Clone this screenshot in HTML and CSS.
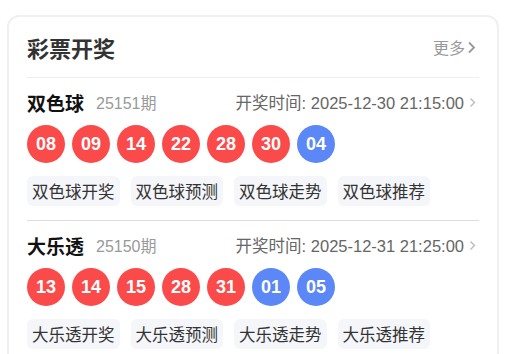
FILE: index.html
```html
<!DOCTYPE html>
<html lang="zh-CN">
<head>
  <meta charset="UTF-8" />
  <meta name="viewport" content="width=device-width, initial-scale=1.0"/>
  <title>彩票开奖</title>
  <link rel="stylesheet" href="styles.css">
</head>
<body>

  <div class="card">
    <div class="card-header">
      <h2>彩票开奖</h2>
      <a class="more" href="#">更多
        <svg width="9" height="13" viewBox="0 0 9 13"><path d="M2 1.5 L7 6.5 L2 11.5" fill="none" stroke="#999" stroke-width="1.8"/></svg>
      </a>
    </div>

    <div class="lottery">
      <div class="lottery-top">
        <span class="name">双色球</span>
        <span class="issue">25151期</span>
        <span class="time">开奖时间: 2025-12-30 21:15:00
          <svg width="7" height="11" viewBox="0 0 7 11"><path d="M1.5 1.5 L5.5 5.5 L1.5 9.5" fill="none" stroke="#bbb" stroke-width="1.4"/></svg>
        </span>
      </div>
      <div class="balls">
        <span class="ball red">08</span>
        <span class="ball red">09</span>
        <span class="ball red">14</span>
        <span class="ball red">22</span>
        <span class="ball red">28</span>
        <span class="ball red">30</span>
        <span class="ball blue">04</span>
      </div>
      <div class="tags">
        <a href="#">双色球开奖</a>
        <a href="#">双色球预测</a>
        <a href="#">双色球走势</a>
        <a href="#">双色球推荐</a>
      </div>
    </div>

    <div class="lottery">
      <div class="lottery-top">
        <span class="name">大乐透</span>
        <span class="issue">25150期</span>
        <span class="time">开奖时间: 2025-12-31 21:25:00
          <svg width="7" height="11" viewBox="0 0 7 11"><path d="M1.5 1.5 L5.5 5.5 L1.5 9.5" fill="none" stroke="#bbb" stroke-width="1.4"/></svg>
        </span>
      </div>
      <div class="balls">
        <span class="ball red">13</span>
        <span class="ball red">14</span>
        <span class="ball red">15</span>
        <span class="ball red">28</span>
        <span class="ball red">31</span>
        <span class="ball blue">01</span>
        <span class="ball blue">05</span>
      </div>
      <div class="tags">
        <a href="#">大乐透开奖</a>
        <a href="#">大乐透预测</a>
        <a href="#">大乐透走势</a>
        <a href="#">大乐透推荐</a>
      </div>
    </div>
  </div>

</body>
</html>
```

FILE: styles.css
```css
body {
  font-family: 'Liberation Sans', 'Noto Sans CJK SC', sans-serif;
  background: #fff;
  margin: 0;
  padding: 15px 0 0 7px;
  color: #333;
}

.card {
  width: 492px;
  box-sizing: border-box;
  border: 2px solid #f0f0f0;
  border-radius: 12px;
  padding: 0 18px;
  background: #fff;
}

.card-header {
  display: flex;
  justify-content: space-between;
  align-items: center;
  height: 60px;
  border-bottom: 1px solid #eee;
}

.card-header h2 {
  font-size: 22px;
  font-weight: bold;
  color: #333;
  margin: 0;
}

.more {
  display: flex;
  align-items: center;
  gap: 2px;
  font-size: 16px;
  color: #999;
  text-decoration: none;
  margin-right: 3px;
}

.lottery {
  padding: 14px 0;
  border-bottom: 1px solid #ddd;
}

.lottery:last-child {
  border-bottom: none;
}

.lottery-top {
  display: flex;
  align-items: center;
  height: 20px;
}

.name {
  font-size: 19px;
  font-weight: bold;
  color: #111;
}

.issue {
  font-size: 16px;
  color: #999;
  margin-left: 12px;
}

.time {
  margin-left: auto;
  display: flex;
  align-items: center;
  gap: 5px;
  font-size: 16.5px;
  color: #666;
  margin-right: 3px;
}

.balls {
  display: flex;
  gap: 7px;
  margin-top: 13px;
}

.ball {
  width: 38px;
  height: 38px;
  border-radius: 50%;
  display: flex;
  align-items: center;
  justify-content: center;
  color: #fff;
  font-size: 18px;
  font-weight: bold;
}

.ball.red {
  background: #fb4a4a;
}

.ball.blue {
  background: #5b88f6;
}

.tags {
  display: flex;
  gap: 11px;
  margin-top: 13px;
}

.tags a {
  display: flex;
  align-items: center;
  height: 30px;
  padding: 0 5px;
  background: #f5f6fa;
  border-radius: 6px;
  font-size: 16.5px;
  color: #333;
  text-decoration: none;
}
```
